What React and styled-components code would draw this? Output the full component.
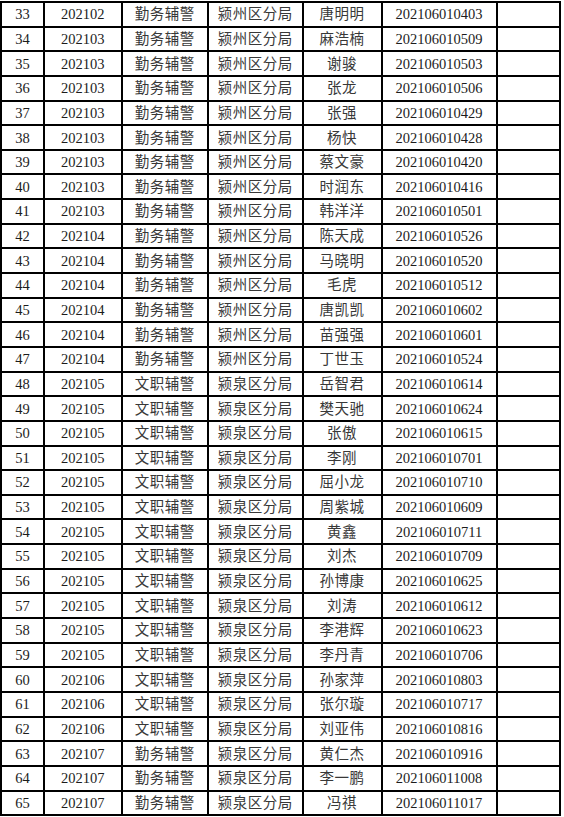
import React from "react";
import styled, { createGlobalStyle } from "styled-components";

const GlobalStyle = createGlobalStyle`
  html, body {
    margin: 0;
    padding: 0;
    background: #ffffff;
  }
`;

const Page = styled.div`
  width: 564px;
  height: 817px;
  overflow: hidden;
  background: #ffffff;
  padding-top: 1px;
`;

const Sheet = styled.table`
  width: 561px;
  table-layout: fixed;
  border-collapse: collapse;
  font-family: "Liberation Serif", "Noto Sans CJK SC", serif;
  font-size: 14.5px;
  color: #1c1c1c;
`;

const Row = styled.tr`
  height: 24.65px;
`;

const Cell = styled.td`
  border: 2px solid #000000;
  padding: 0;
  text-align: center;
  vertical-align: middle;
  line-height: 20px;
  white-space: nowrap;
  color: ${(p) => (p.$cjk ? "#383838" : "#1c1c1c")};
  letter-spacing: ${(p) => (p.$cjk ? "0.5px" : "0")};
`;

const widths = [43, 77.5, 86.5, 94.5, 79, 115, 63.5];

const rows = [
  [33, "202102", "勤务辅警", "颍州区分局", "唐明明", "202106010403"],
  [34, "202103", "勤务辅警", "颍州区分局", "麻浩楠", "202106010509"],
  [35, "202103", "勤务辅警", "颍州区分局", "谢骏", "202106010503"],
  [36, "202103", "勤务辅警", "颍州区分局", "张龙", "202106010506"],
  [37, "202103", "勤务辅警", "颍州区分局", "张强", "202106010429"],
  [38, "202103", "勤务辅警", "颍州区分局", "杨快", "202106010428"],
  [39, "202103", "勤务辅警", "颍州区分局", "蔡文豪", "202106010420"],
  [40, "202103", "勤务辅警", "颍州区分局", "时润东", "202106010416"],
  [41, "202103", "勤务辅警", "颍州区分局", "韩洋洋", "202106010501"],
  [42, "202104", "勤务辅警", "颍州区分局", "陈天成", "202106010526"],
  [43, "202104", "勤务辅警", "颍州区分局", "马晓明", "202106010520"],
  [44, "202104", "勤务辅警", "颍州区分局", "毛虎", "202106010512"],
  [45, "202104", "勤务辅警", "颍州区分局", "唐凯凯", "202106010602"],
  [46, "202104", "勤务辅警", "颍州区分局", "苗强强", "202106010601"],
  [47, "202104", "勤务辅警", "颍州区分局", "丁世玉", "202106010524"],
  [48, "202105", "文职辅警", "颍泉区分局", "岳智君", "202106010614"],
  [49, "202105", "文职辅警", "颍泉区分局", "樊天驰", "202106010624"],
  [50, "202105", "文职辅警", "颍泉区分局", "张傲", "202106010615"],
  [51, "202105", "文职辅警", "颍泉区分局", "李刚", "202106010701"],
  [52, "202105", "文职辅警", "颍泉区分局", "屈小龙", "202106010710"],
  [53, "202105", "文职辅警", "颍泉区分局", "周紫城", "202106010609"],
  [54, "202105", "文职辅警", "颍泉区分局", "黄鑫", "202106010711"],
  [55, "202105", "文职辅警", "颍泉区分局", "刘杰", "202106010709"],
  [56, "202105", "文职辅警", "颍泉区分局", "孙博康", "202106010625"],
  [57, "202105", "文职辅警", "颍泉区分局", "刘涛", "202106010612"],
  [58, "202105", "文职辅警", "颍泉区分局", "李港辉", "202106010623"],
  [59, "202105", "文职辅警", "颍泉区分局", "李丹青", "202106010706"],
  [60, "202106", "文职辅警", "颍泉区分局", "孙家萍", "202106010803"],
  [61, "202106", "文职辅警", "颍泉区分局", "张尔璇", "202106010717"],
  [62, "202106", "文职辅警", "颍泉区分局", "刘亚伟", "202106010816"],
  [63, "202107", "勤务辅警", "颍泉区分局", "黄仁杰", "202106010916"],
  [64, "202107", "勤务辅警", "颍泉区分局", "李一鹏", "202106011008"],
  [65, "202107", "勤务辅警", "颍泉区分局", "冯祺", "202106011017"],
];

function App() {
  return (
    <>
      <GlobalStyle />
      <Page>
        <Sheet>
          <colgroup>
            {widths.map((w, i) => (
              <col key={i} style={{ width: w + "px" }} />
            ))}
          </colgroup>
          <tbody>
            {rows.map((r) => (
              <Row key={r[0]}>
                <Cell>{r[0]}</Cell>
                <Cell>{r[1]}</Cell>
                <Cell $cjk>{r[2]}</Cell>
                <Cell $cjk>{r[3]}</Cell>
                <Cell $cjk>{r[4]}</Cell>
                <Cell>{r[5]}</Cell>
                <Cell />
              </Row>
            ))}
          </tbody>
        </Sheet>
      </Page>
    </>
  );
}

export default App;
